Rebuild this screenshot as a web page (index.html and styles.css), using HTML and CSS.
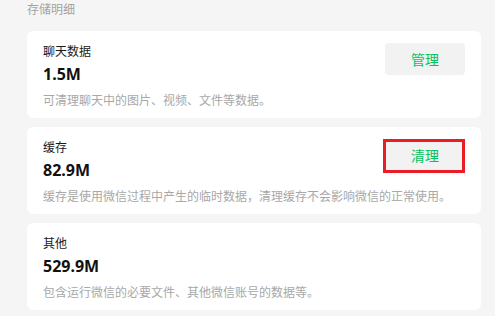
FILE: index.html
```html
<!DOCTYPE html>
<html lang="zh-CN">
<head>
<meta charset="utf-8">
<title>存储明细</title>
<link rel="stylesheet" href="styles.css">
</head>
<body>
<div class="page">
  <div class="section-title">存储明细</div>
  <div class="cards">
    <div class="card">
      <div class="card-head">
        <div class="info">
          <div class="name">聊天数据</div>
          <div class="size">1.5M</div>
        </div>
        <button class="btn">管理</button>
      </div>
      <div class="desc">可清理聊天中的图片、视频、文件等数据。</div>
    </div>
    <div class="card">
      <div class="card-head">
        <div class="info">
          <div class="name">缓存</div>
          <div class="size">82.9M</div>
        </div>
        <button class="btn btn-marked">清理</button>
      </div>
      <div class="desc">缓存是使用微信过程中产生的临时数据，清理缓存不会影响微信的正常使用。</div>
    </div>
    <div class="card">
      <div class="card-head">
        <div class="info">
          <div class="name">其他</div>
          <div class="size">529.9M</div>
        </div>
      </div>
      <div class="desc">包含运行微信的必要文件、其他微信账号的数据等。</div>
    </div>
  </div>
</div>
</body>
</html>
```

FILE: styles.css
```css
html, body {
  margin: 0;
  padding: 0;
  background: #f5f5f5;
}
body {
  font-family: "Noto Sans", "Noto Sans CJK SC", sans-serif;
}
.page {
  padding: 2px 14px 0 27px;
}
.section-title {
  font-size: 12px;
  line-height: 16px;
  color: #a3a3a3;
  margin-bottom: 13px;
}
.cards {
  display: flex;
  flex-direction: column;
  gap: 9px;
}
.card {
  background: #ffffff;
  border-radius: 6px;
  padding: 12px 16px 8px 16px;
  height: 87px;
  box-sizing: border-box;
}
.card-head {
  display: flex;
  justify-content: space-between;
  align-items: flex-start;
}
.info {
  display: flex;
  flex-direction: column;
  gap: 2px;
}
.name {
  font-size: 12px;
  line-height: 18px;
  color: #1a1a1a;
}
.size {
  font-size: 16px;
  line-height: 22px;
  font-weight: 700;
  color: #111111;
}
.desc {
  margin-top: 7px;
  font-size: 12px;
  line-height: 18px;
  color: #a8a8a8;
  white-space: nowrap;
}
.btn {
  position: relative;
  width: 80px;
  height: 32px;
  border: none;
  border-radius: 4px;
  background: #f2f2f2;
  color: #07c160;
  font-family: "Noto Sans CJK SC", sans-serif;
  font-size: 14px;
  padding: 0;
  margin: 0;
}
.btn-marked::after {
  content: "";
  position: absolute;
  top: 0;
  left: -2px;
  right: 0;
  bottom: -2px;
  border: 3px solid #ec1c24;
}
```
